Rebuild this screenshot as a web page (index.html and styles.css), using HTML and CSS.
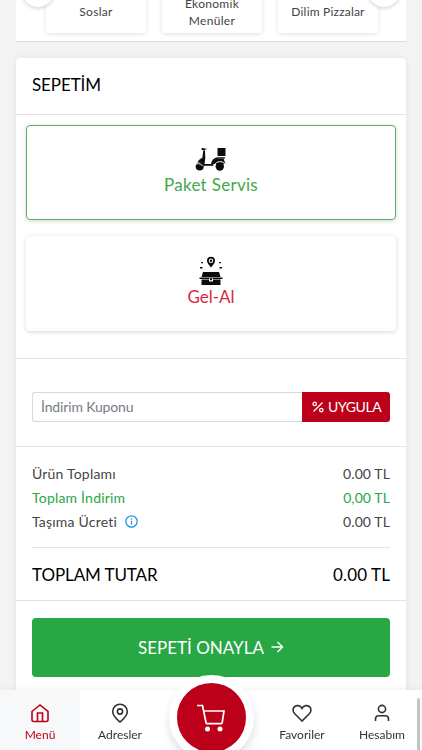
FILE: index.html
```html
<!DOCTYPE html>
<html lang="tr">
<head>
    <meta charset="UTF-8">
    <meta name="viewport" content="width=device-width, initial-scale=1.0">
    <title>Sepetim</title>
    <link rel="stylesheet" href="styles.css">
</head>
<body>
    <section class="categories">
        <div class="category"><span>Soslar</span></div>
        <div class="category"><span>Ekonomik<br>Menüler</span></div>
        <div class="category"><span class="wide">Dilim Pizzalar</span></div>
        <button class="slide-btn prev" aria-label="Önceki"></button>
        <button class="slide-btn next" aria-label="Sonraki"></button>
    </section>

    <main class="cart">
        <h1 class="cart-title">SEPETİM</h1>

        <div class="services">
            <div class="service active">
                <svg class="service-icon" width="32" height="26" viewBox="0 0 32 26">
                    <path d="M22.500 1h8v8h-8z"/>
                    <path d="M6 2l1.500-1 5 1-5 1.300z"/>
                    <path d="M8.300 3.500l1.600-.5.400 8-.8 6h6.500c.8-4 3-6.300 6.500-6.800h7.500v1.300h-6.500c-3.500.4-5 3-5.200 7.300H8.500c-.8-2.500-2.500-3.600-6-3.600C3.500 13 5.500 11.500 7.300 11z"/>
                    <path d="M19.500 13c1-1 3-1.500 4.500-1.500h4.500l2 5.500H18z"/>
                    <circle cx="4.700" cy="19.500" r="4"/>
                    <circle cx="24.800" cy="19.500" r="4.200"/>
                    <path class="cut" d="M.5 17.500c2.500-1.500 5.500-.8 7 1.500M19.500 18c1.500-4 8-4.500 10.500-1"/>
                </svg>
                <span class="paket">Paket Servis</span>
            </div>
            <div class="service">
                <svg class="service-icon" width="24" height="30" viewBox="0 0 24 30">
                    <path fill-rule="evenodd" d="M12 11.500C9.500 8.500 8 7 8 4.800a4 4 0 0 1 8 0c0 2.200-1.500 3.700-4 6.700zM12 2.500a2.200 2.200 0 1 0 0 4.400 2.200 2.200 0 0 0 0-4.400z"/>
                    <circle cx="12" cy="4.700" r="1.200"/>
                    <path d="M2 6l2 .3v1.200L2 7zM20 6.300l2-.3v1l-2 .5zM1 11h2.500v1.500H1zM20.500 11H23v1.500h-2.500z"/>
                    <path d="M4 16h16l1.500 5h-19z"/>
                    <path d="M.5 21.500h23V23H.5zM2.500 23.500h19V29h-19z"/>
                    <path class="clasp" d="M10 22.300h4v3.200h-4z"/>
                    <path d="M11 22.300h2v2h-2z"/>
                </svg>
                <span class="gelal">Gel-Al</span>
            </div>
        </div>

        <form class="coupon">
            <input class="coupon-input" type="text" placeholder="İndirim Kuponu">
            <button class="coupon-btn" type="button">
                <svg width="12" height="12" viewBox="0 0 12 12"><path d="M10.500 1.500l-9 9"/><circle cx="2.700" cy="2.900" r="1.700"/><circle cx="9.300" cy="9.100" r="1.700"/></svg>
                <span>UYGULA</span>
            </button>
        </form>

        <div class="summary">
            <div class="row"><span>Ürün Toplamı</span><span class="price">0.00 TL</span></div>
            <div class="row discount"><span>Toplam İndirim</span><span class="price">0,00 TL</span></div>
            <div class="row">
                <span class="label">Taşıma Ücreti
                    <svg class="info" width="13" height="13" viewBox="0 0 13 13"><circle cx="6.500" cy="6.500" r="5.700"/><path d="M6.500 5.800v3.700M6.500 3.500v1.200"/></svg>
                </span>
                <span class="price">0.00 TL</span>
            </div>
            <div class="row total"><span>TOPLAM TUTAR</span><span class="price">0.00 TL</span></div>
        </div>

        <div class="confirm">
            <button class="confirm-btn">
                <span>SEPETİ ONAYLA</span>
                <svg width="14" height="14" viewBox="0 0 14 14"><path d="M1.500 6h11M7.500 1l5 5-5 5"/></svg>
            </button>
        </div>
    </main>

    <nav class="bottom-nav">
        <a class="nav-item active">
            <svg width="20" height="20" viewBox="0 0 20 20"><path d="M2 8.500L10 2l8 6.500v8.500a1.500 1.500 0 0 1-1.500 1.500h-13A1.500 1.500 0 0 1 2 17z"/><path d="M7.500 18.500V10h5v8.500"/></svg>
            <span>Menü</span>
        </a>
        <a class="nav-item">
            <svg width="20" height="20" viewBox="0 0 20 20"><path d="M10 19c-2.500-2.200-7.300-5.800-7.300-10.500a7.300 7.300 0 0 1 14.600 0C17.300 13.200 12.500 16.800 10 19z"/><circle cx="10" cy="8.500" r="2.600"/></svg>
            <span>Adresler</span>
        </a>
        <a class="nav-cart" aria-label="Sepet">
            <svg width="28" height="28" viewBox="0 0 28 28"><path d="M0 1.500h5.500L9 18.500a1.500 1.500 0 0 0 1.500 1.200h13.200a1.500 1.500 0 0 0 1.500-1.200L27 7H6.700"/><circle cx="10.500" cy="25" r="2.500"/><circle cx="23" cy="25" r="2.500"/></svg>
        </a>
        <a class="nav-item">
            <svg width="20" height="20" viewBox="0 0 20 20"><path d="M10 18L2.500 10.500C.3 8 .8 5 2.800 3.500c2-1.500 5-1.100 6.400.8L10 5.500l.8-1.200c1.400-1.900 4.400-2.300 6.400-.8 2 1.500 2.500 4.500.3 7z"/></svg>
            <span>Favoriler</span>
        </a>
        <a class="nav-item">
            <svg width="20" height="20" viewBox="0 0 20 20"><circle cx="10" cy="6" r="3.600"/><path d="M3.500 18v-2c0-2 1.300-3.200 3.200-3.200h6.600c1.900 0 3.200 1.200 3.200 3.200v2"/></svg>
            <span>Hesabım</span>
        </a>
        <span class="scroll-thumb"></span>
    </nav>
</body>
</html>
```

FILE: styles.css
```css
* {
    box-sizing: border-box;
}
body {
    margin: 0;
    height: 750px;
    overflow: hidden;
    background: #f3f3f3;
    font-family: Lato, "Noto Sans", sans-serif;
    font-size: 14px;
    color: #444;
}
button, input {
    font-family: inherit;
}
svg {
    display: block;
    flex: none;
    fill: none;
    stroke: currentColor;
}

/* category slider */
.categories {
    position: relative;
    display: flex;
    justify-content: center;
    align-items: flex-end;
    gap: 16px;
    height: 42px;
    margin: 0 16px 16px;
    padding: 0 0 8px 2px;
    background: #fff;
    border-bottom: 1px solid #dedede;
}
.category {
    display: flex;
    align-items: center;
    justify-content: center;
    width: 100px;
    height: 43px;
    border-radius: 4px;
    background: #fff;
    box-shadow: 0 1px 4px rgba(0, 0, 0, 0.13);
    text-align: center;
    font-size: 12px;
    line-height: 17px;
    letter-spacing: 0.3px;
}
.wide {
    letter-spacing: 0.2px;
}
.slide-btn {
    position: absolute;
    top: -25px;
    width: 32px;
    height: 32px;
    padding: 0;
    border: none;
    border-radius: 50%;
    background: #fff;
    box-shadow: 0 1px 4px rgba(0, 0, 0, 0.2);
}
.prev {
    left: 6px;
}
.next {
    right: 6px;
}

/* cart card */
.cart {
    margin: 0 16px;
    height: 720px;
    background: #fff;
    border-radius: 4px;
    box-shadow: 0 0 6px rgba(0, 0, 0, 0.07);
}
.cart-title {
    display: flex;
    align-items: center;
    height: 57px;
    margin: 0;
    padding: 0 16px 3px;
    border-bottom: 1px solid #e1e2e6;
    font-size: 17px;
    font-weight: 400;
    letter-spacing: -0.1px;
    color: #000;
}
.services {
    display: flex;
    flex-direction: column;
    gap: 16px;
    height: 244px;
    padding: 10px;
    border-bottom: 1px solid #e3e3e6;
}
.service {
    display: flex;
    flex-direction: column;
    align-items: center;
    height: 95px;
    padding-top: 20px;
    border-radius: 4px;
    box-shadow: 0 1px 4px rgba(0, 0, 0, 0.17);
    color: #d8283c;
    font-size: 17px;
    line-height: 22px;
}
.service.active {
    border: 1px solid #58af61;
    color: #43a84b;
}
.service-icon {
    fill: #0b0b0b;
    stroke: none;
}
.service.active .service-icon {
    margin: 1px 0;
}
.cut {
    fill: none;
    stroke: #fff;
    stroke-width: 1;
}
.clasp {
    fill: #fff;
}
.paket {
    letter-spacing: 0.3px;
}
.coupon {
    display: flex;
    height: 88px;
    padding: 33px 16px 24px;
    border-bottom: 1px solid #e1e2e6;
}
.coupon-input {
    flex: 1;
    min-width: 0;
    height: 30px;
    padding: 0 8px 2px;
    border: 1px solid #d5d8dc;
    border-right: none;
    border-radius: 3px 0 0 3px;
    font-size: 14px;
    letter-spacing: -0.15px;
}
.coupon-input::placeholder {
    color: #747c84;
}
.coupon-btn {
    display: flex;
    align-items: center;
    gap: 4px;
    width: 88px;
    height: 30px;
    padding: 0 0 1px 10px;
    border: none;
    border-radius: 0 3px 3px 0;
    background: #bd0019;
    color: #fff;
    font-size: 14px;
    letter-spacing: -0.4px;
}
.coupon-btn svg {
    stroke-width: 1.3;
}
.summary {
    height: 154px;
    padding: 14px 16px 0;
    border-bottom: 1px solid #e3e3e3;
}
.row {
    display: flex;
    justify-content: space-between;
    align-items: center;
    height: 24px;
    letter-spacing: 0.2px;
}
.row .price {
    letter-spacing: 0.1px;
}
.label {
    display: flex;
    align-items: center;
    gap: 8px;
}
.info {
    color: #2196dc;
    stroke-width: 1.3;
}
.discount {
    color: #28a745;
}
.total {
    height: 54px;
    margin-top: 14px;
    border-top: 1px solid #e5e5e5;
    font-size: 17px;
    letter-spacing: -0.1px;
    color: #000;
}
.confirm {
    padding: 17px 16px;
}
.confirm-btn {
    display: flex;
    align-items: center;
    justify-content: center;
    gap: 6px;
    width: 100%;
    height: 59px;
    border: none;
    border-radius: 4px;
    background: #28a745;
    color: #fff;
    font-size: 17px;
}
.confirm-btn svg {
    stroke-width: 1.4;
}

/* bottom navigation */
.bottom-nav {
    position: fixed;
    left: 0;
    right: 0;
    bottom: 0;
    display: grid;
    grid-template-columns: 80px 80px 102px 80px 80px;
    height: 60px;
    background: #fff;
    box-shadow: 0 0 8px rgba(0, 0, 0, 0.07);
}
.nav-item {
    display: flex;
    flex-direction: column;
    align-items: center;
    gap: 4px;
    padding-top: 13px;
    font-size: 12px;
    line-height: 15px;
    color: #333;
}
.nav-item svg {
    stroke-width: 1.6;
}
.nav-item.active {
    background: #f7f8fa;
    color: #bd0019;
}
.nav-cart {
    display: flex;
    align-items: center;
    justify-content: center;
    justify-self: center;
    width: 85px;
    height: 85px;
    margin-top: -15px;
    border: 8px solid #fff;
    border-radius: 50%;
    background: #bd0019;
    color: #fff;
    box-shadow: 0 6px 10px rgba(0, 0, 0, 0.12);
}
.nav-cart svg {
    stroke-width: 1.7;
}
.nav-cart circle {
    fill: #fff;
    stroke: none;
}
.scroll-thumb {
    position: absolute;
    right: 2px;
    top: 8px;
    width: 3px;
    height: 52px;
    border-radius: 2px 2px 0 0;
    background: #c4c4c4;
}
```
